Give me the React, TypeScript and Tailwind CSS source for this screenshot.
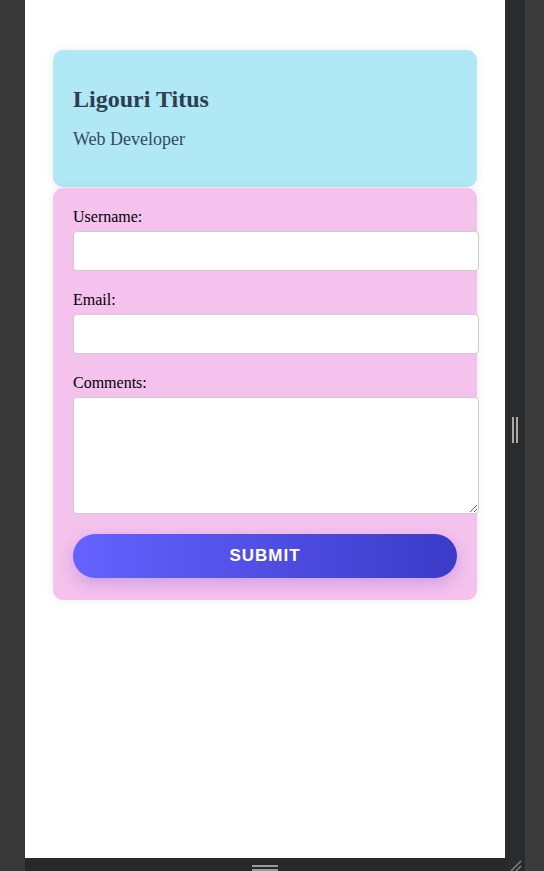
export default function App() {
  const fields = [
    { label: 'Username:', type: 'text' },
    { label: 'Email:', type: 'email' },
  ];

  return (
    <div className="flex h-[871px] w-[544px] overflow-hidden bg-[#3a3a3a]">
      <div className="w-[25px] shrink-0 bg-[#383838]" />

      <div className="flex w-[480px] shrink-0 flex-col">
        <main className="h-[858px] bg-white px-[28px] pt-[50px] font-['Liberation_Serif',serif]">
          <div className="rounded-[10px] bg-[#b0e8f5] px-5 pt-[36px] pb-[37px] shadow-[0_0_10px_rgba(0,0,0,0.08)]">
            <h2 className="text-[24px] font-bold leading-[27.6px] text-[#2c3e50]">Ligouri Titus</h2>
            <p className="mt-[14px] text-[18px] leading-[22px] text-[#34495e]">Web Developer</p>
          </div>

          <form className="mt-px rounded-[10px] bg-[#f5c1ed] px-5 pt-5 pb-[22px] shadow-[0_0_10px_rgba(0,0,0,0.08)]">
            {fields.map((f) => (
              <div key={f.label} className="mb-5">
                <label className="mb-[5px] block text-[16px] leading-[18px] text-black">{f.label}</label>
                <input
                  type={f.type}
                  className="block h-[40px] w-[406px] rounded-[4px] border border-[#ccc] bg-white px-[10px] outline-none"
                />
              </div>
            ))}
            <div className="mb-5">
              <label className="mb-[5px] block text-[16px] leading-[18px] text-black">Comments:</label>
              <textarea className="block h-[117px] w-[406px] rounded-[4px] border border-[#ccc] bg-white px-[10px] outline-none" />
            </div>
            <button
              type="button"
              className="block h-[44px] w-full rounded-full bg-gradient-to-r from-[#6562ff] to-[#3c3ac8] font-['Liberation_Sans',Arial,sans-serif] text-[17px] font-bold tracking-[1px] text-white uppercase shadow-[0_6px_15px_rgba(90,70,200,0.25)]"
            >
              Submit
            </button>
          </form>
        </main>

        <div className="relative h-[13px] bg-[#27282a]">
          <div className="absolute top-[7px] left-[227px] h-[2px] w-[26px] bg-[#9a9a9a]" />
          <div className="absolute top-[11px] left-[227px] h-[2px] w-[26px] bg-[#9a9a9a]" />
        </div>
      </div>

      <div className="relative w-[20px] shrink-0 bg-[#2a2b2d]">
        <div className="absolute top-[417px] left-[7px] h-[26px] w-[2px] bg-[#aaa]" />
        <div className="absolute top-[417px] left-[11px] h-[26px] w-[2px] bg-[#aaa]" />
        <svg className="absolute bottom-0 left-[4px]" width="14" height="12" viewBox="0 0 14 12">
          <path d="M2 12 L12 2 M7 12 L12 7" stroke="#8a8a8a" strokeWidth="1.3" fill="none" />
        </svg>
      </div>

      <div className="w-[19px] shrink-0 bg-[#3b3b3b]" />
    </div>
  );
}
